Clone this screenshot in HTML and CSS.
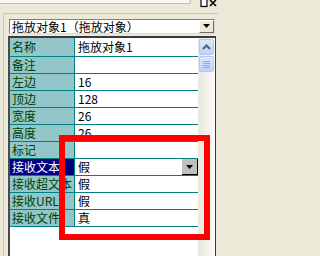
FILE: index.html
```html
<!DOCTYPE html>
<html>
<head>
<meta charset="utf-8">
<link rel="stylesheet" href="styles.css">
</head>
<body>
<div class="caption">
  <div class="capbar"></div>
  <svg class="winbtn" width="9" height="8" viewBox="0 0 9 8"><rect x="1" y="-2" width="6" height="8.5" fill="#fff" stroke="#000" stroke-width="1.2"/><rect x="1" y="-2" width="6" height="2" fill="#000"/></svg>
  <svg class="winbtn" width="9" height="8" viewBox="0 0 9 8"><path d="M1 0 L7 6 M7 0 L1 6" stroke="#000" stroke-width="1.6"/></svg>
</div>
<div class="panel">
  <div class="combo">
    <span class="combo-text">拖放对象1（拖放对象）</span>
    <span class="combo-btn"><svg width="9" height="5" viewBox="0 0 9 5"><path d="M1 0 H8 L4.5 4 Z" fill="#000"/></svg></span>
  </div>
  <div class="grid">
    <div class="rows">
      <div class="row first"><div class="lbl">名称</div><div class="val">拖放对象1</div></div>
      <div class="row"><div class="lbl">备注</div><div class="val"></div></div>
      <div class="row"><div class="lbl">左边</div><div class="val">16</div></div>
      <div class="row"><div class="lbl">顶边</div><div class="val">128</div></div>
      <div class="row"><div class="lbl">宽度</div><div class="val">26</div></div>
      <div class="row"><div class="lbl">高度</div><div class="val">26</div></div>
      <div class="row"><div class="lbl">标记</div><div class="val"></div></div>
      <div class="row selected"><div class="lbl">接收文本</div><div class="val">假<span class="drop"><svg width="7" height="4" viewBox="0 0 7 4"><path d="M0 0 H7 L3.5 4 Z" fill="#000"/></svg></span></div></div>
      <div class="row"><div class="lbl">接收超文本</div><div class="val">假</div></div>
      <div class="row"><div class="lbl">接收URL</div><div class="val">假</div></div>
      <div class="row"><div class="lbl">接收文件</div><div class="val">真</div></div>
    </div>
    <div class="scrollbar">
      <div class="sb-btn"><svg width="9" height="6" viewBox="0 0 9 6"><path d="M1 5 L4.5 1.5 L8 5" fill="none" stroke="#4D6185" stroke-width="2"/></svg></div>
      <div class="sb-thumb"><span></span><span></span><span></span><span></span></div>
    </div>
  </div>
</div>
<div class="annot"></div>
</body>
</html>
```
FILE: styles.css
```css
html, body {
  margin: 0;
  padding: 0;
}
body {
  width: 218px;
  height: 256px;
  overflow: hidden;
  position: relative;
  background: #ECE9D8;
  font-family: "Noto Sans CJK SC", "Liberation Sans", sans-serif;
  font-size: 12px;
}
.caption {
  height: 13px;
  display: flex;
  align-items: flex-start;
}
.capbar {
  width: 191px;
  height: 3px;
  margin-top: -1px;
  margin-right: 9px;
  border: 1px solid #C2BFAE;
  border-left: none;
  border-radius: 0 3px 3px 0;
  background: #F7F6F1;
}
.winbtn {
  display: block;
}
.panel {
  margin-left: 3px;
  height: 243px;
  box-sizing: border-box;
  border-left: 1px solid #C9C6B6;
  border-top: 1px solid #C9C6B6;
  padding: 5px 0 0 4px;
}
.combo {
  margin-left: 1px;
  width: 206px;
  height: 15px;
  box-sizing: border-box;
  border: 1px solid #7F7F7F;
  border-right-color: #DADADA;
  border-bottom-color: #DADADA;
  background: #fff;
  display: flex;
  align-items: center;
}
.combo-text {
  flex: 1;
  padding-left: 2px;
  line-height: 13px;
  color: #000;
  white-space: nowrap;
}
.combo-btn {
  width: 15px;
  height: 13px;
  box-sizing: border-box;
  background: #ECE9D8;
  border-top: 1px solid #fff;
  border-left: 1px solid #fff;
  border-right: 1px solid #716F64;
  border-bottom: 1px solid #716F64;
  display: flex;
  align-items: center;
  justify-content: center;
}
.grid {
  margin-top: 2px;
  width: 208px;
  height: 220px;
  box-sizing: border-box;
  border-top: 2px solid #3A3A3A;
  border-left: 2px solid #4A4A4A;
  border-right: 1px solid #3A3A3A;
  background: #fff;
  display: flex;
}
.rows {
  width: 188px;
  display: flex;
  flex-direction: column;
}
.row {
  height: 17px;
  box-sizing: border-box;
  border-bottom: 1px solid #008080;
  display: flex;
  flex-shrink: 0;
}
.row.first {
  height: 19px;
  padding-top: 1px;
}
.lbl {
  width: 65px;
  border-right: 1px solid #008080;
  background: #93C6C9;
  color: #004000;
  padding-left: 2px;
  box-sizing: border-box;
  line-height: 16px;
  white-space: nowrap;
  overflow: hidden;
}
.row.first .lbl {
  margin-top: -1px;
  padding-top: 1px;
}
.val {
  flex: 1;
  padding-left: 3px;
  line-height: 16px;
  color: #000;
  display: flex;
  align-items: flex-start;
}
.row.selected .lbl {
  background: #000080;
  color: #fff;
}
.drop {
  margin-left: auto;
  width: 16px;
  height: 16px;
  box-sizing: border-box;
  background: #C0C0C0;
  border-right: 1px solid #000;
  border-bottom: 1px solid #000;
  display: flex;
  align-items: center;
  justify-content: center;
}
.scrollbar {
  width: 17px;
  background: linear-gradient(to right, #E9E7DE, #FBFBF8);
  display: flex;
  flex-direction: column;
  align-items: center;
  padding-top: 1px;
}
.sb-btn, .sb-thumb {
  width: 15px;
  height: 16px;
  box-sizing: border-box;
  border: 1px solid #B5C8F3;
  border-radius: 2px;
  background: linear-gradient(to bottom, #DCE6FD, #BFD1FA);
  display: flex;
  align-items: center;
  justify-content: center;
  margin-bottom: 1px;
}
.sb-thumb {
  flex-direction: column;
  gap: 1px;
}
.sb-thumb span {
  width: 7px;
  height: 1px;
  background: #8EA8E6;
}
.annot {
  position: absolute;
  left: 59px;
  top: 135px;
  width: 151px;
  height: 105px;
  box-sizing: border-box;
  border: 6px solid #FF0000;
}
```
